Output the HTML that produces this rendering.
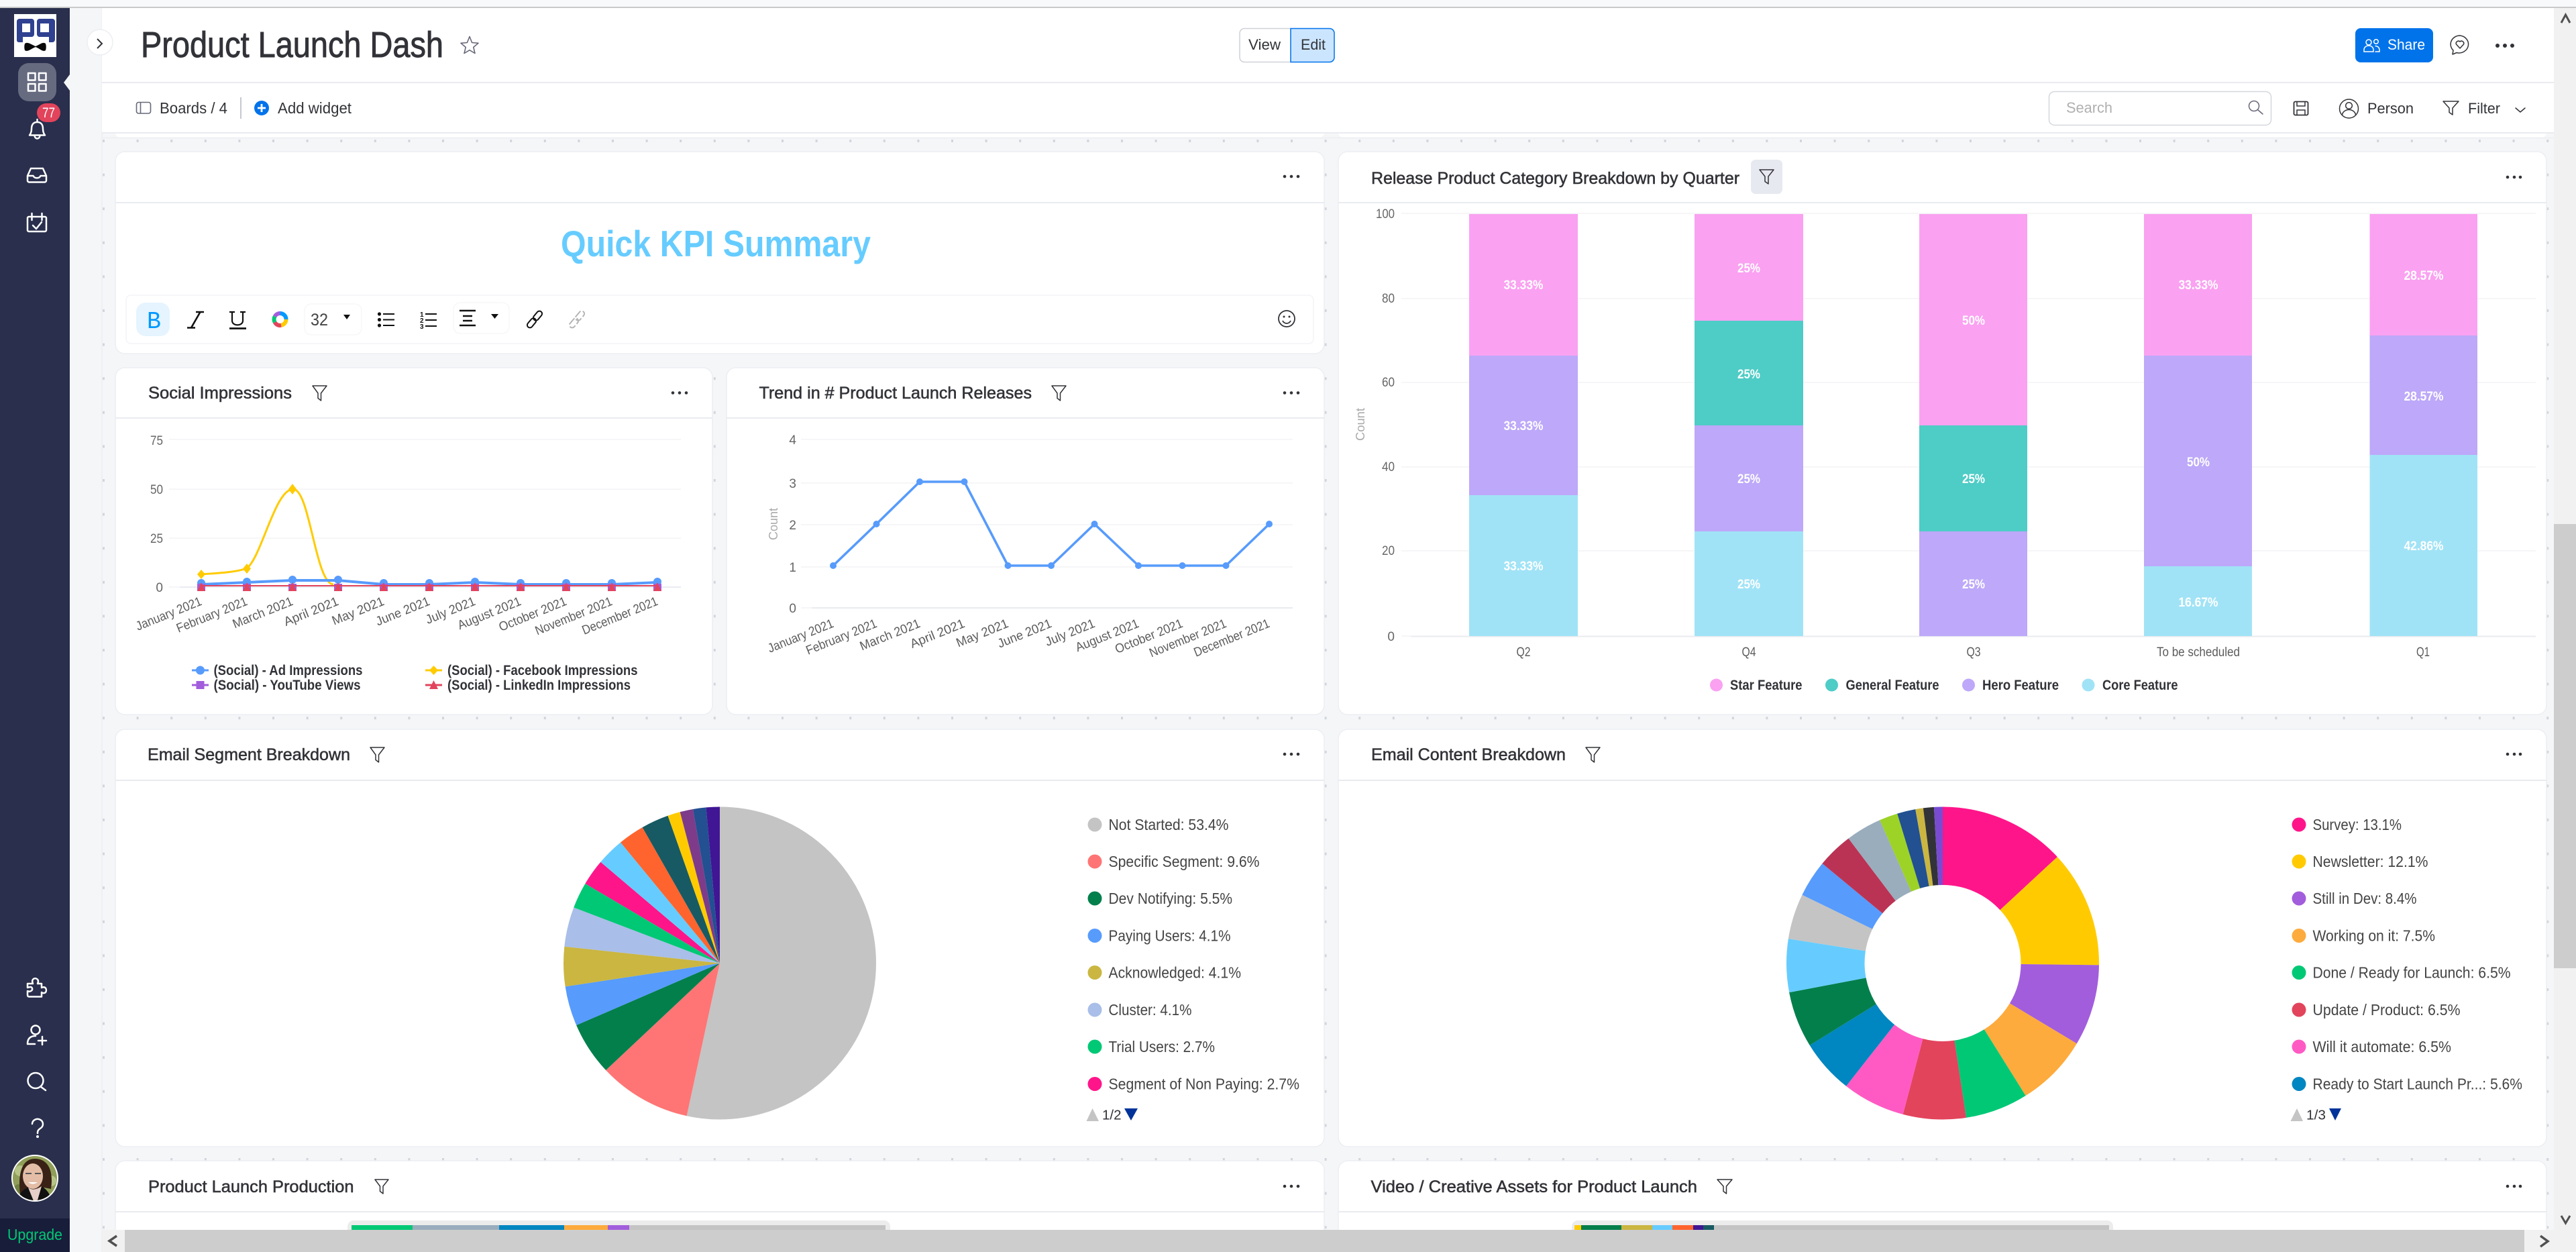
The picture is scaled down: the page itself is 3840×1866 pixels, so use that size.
<!DOCTYPE html>
<html lang="en">
<head>
<meta charset="utf-8">
<title>Product Launch Dash</title>
<style>
html,body{margin:0;padding:0;background:#fff;width:3840px;height:1866px;overflow:hidden}
svg{display:block}
text{font-family:"Liberation Sans",sans-serif;fill:#323338}
.h{font-size:25px;stroke:#323338;stroke-width:.55}
.ax{font-size:19px;fill:#666}
.xl{font-size:19px;fill:#5c5c5c}
.cnt{font-size:18px;fill:#aaa}
.dl{font-size:19px;font-weight:700;fill:#fff;text-anchor:middle}
.lg{font-size:21px;font-weight:700}
.pl{font-size:23px;fill:#444}
.ic{fill:none;stroke:#323338;stroke-width:1.5;stroke-linejoin:round;stroke-linecap:round}
.wi{fill:none;stroke:#fff;stroke-width:2.5;stroke-linejoin:round;stroke-linecap:round}
.card{fill:#fff;stroke:#eceef2;stroke-width:1.5}
.ln{stroke:#e9ebf0;stroke-width:2}
.gl{stroke:#f6f6f8;stroke-width:2}
</style>
</head>
<body>
<svg xmlns="http://www.w3.org/2000/svg" width="3840" height="1866" viewBox="0 0 3840 1866">
<defs>
<pattern id="dots" x="153" y="208" width="50.6" height="50.6" patternUnits="userSpaceOnUse"><rect width="3" height="4" fill="#d3d5dc"/></pattern>
<clipPath id="av"><circle cx="52" cy="1756" r="33"/></clipPath>
</defs>

<!-- page base -->
<rect width="3840" height="1866" fill="#f5f6f8"/>
<rect width="3840" height="10" fill="#f8f9fb"/>
<rect y="10" width="3840" height="2" fill="#c9c9c9"/>

<!-- content background -->
<rect x="152" y="205" width="3655" height="1661" fill="#f5f6f8"/>
<rect x="152" y="205" width="3655" height="1661" fill="url(#dots)"/>
<line x1="152" y1="12" x2="152" y2="1866" stroke="#e6e9ef" stroke-width="1"/>

<!-- header -->
<rect x="152" y="12" width="3655" height="186" fill="#fff"/>
<line class="ln" x1="152" y1="123" x2="3807" y2="123"/>
<line class="ln" x1="152" y1="198" x2="3807" y2="198"/>
<path d="M172 199H1974V197C1974 203 1970 205 1966 205H180C176 205 172 203 172 197Z" fill="#fff"/>
<path d="M1995 199H3796V197C3796 203 3792 205 3788 205H2003C1999 205 1995 203 1995 197Z" fill="#fff"/>
<line x1="152" y1="205.500" x2="3807" y2="205.500" stroke="#eceef2" stroke-width="1.500"/>

<text x="210" y="85" font-size="54" textLength="451" lengthAdjust="spacingAndGlyphs" style="stroke:#323338;stroke-width:.9">Product Launch Dash</text>
<path d="M700 54.500L703.600 63.500L713 64.300L705.800 70.400L708 79.500L700 74.700L692 79.500L694.200 70.400L687 64.300L696.400 63.500Z" fill="none" stroke="#676879" stroke-width="1.600" stroke-linejoin="round"/>

<!-- view / edit -->
<path d="M1924 42.500H1855a7 7 0 0 0-7 7V85.500a7 7 0 0 0 7 7H1924Z" fill="#fff" stroke="#cfd1d9" stroke-width="1.500"/>
<path d="M1924 42.500H1982a7 7 0 0 1 7 7V85.500a7 7 0 0 1-7 7H1924Z" fill="#cce5ff" stroke="#0073ea" stroke-width="1.500"/>
<text x="1861" y="74" font-size="22" textLength="48" lengthAdjust="spacingAndGlyphs">View</text>
<text x="1939" y="74" font-size="22" textLength="37" lengthAdjust="spacingAndGlyphs">Edit</text>

<!-- share -->
<rect x="3511" y="42" width="116" height="51" rx="8" fill="#0073ea"/>
<g fill="none" stroke="#fff" stroke-width="1.500" stroke-linecap="round">
<circle cx="3531" cy="63" r="4"/>
<path d="M3524 77V74a7 6 0 0 1 14 0V77Z"/>
<circle cx="3542" cy="62" r="3.300"/>
<path d="M3541 68.500a6 6 0 0 1 6 5.500V77H3541"/>
</g>
<text x="3559" y="74" font-size="22" textLength="56" lengthAdjust="spacingAndGlyphs" style="fill:#fff">Share</text>

<!-- chat heart -->
<path class="ic" d="M3667 53a14 13 0 1 1-5 25.500L3656 81L3657 75A14 13 0 0 1 3667 53Z"/>
<path class="ic" d="M3667 72L3661.500 66a3.500 3.500 0 0 1 5.500-4a3.500 3.500 0 0 1 5.500 4Z"/>
<circle cx="3723" cy="68" r="3" fill="#323338"/><circle cx="3734" cy="68" r="3" fill="#323338"/><circle cx="3745" cy="68" r="3" fill="#323338"/>

<!-- row 2 left -->
<rect x="203.500" y="152.500" width="21" height="16.500" rx="3" fill="none" stroke="#676879" stroke-width="1.600"/>
<line x1="209.500" y1="152.500" x2="209.500" y2="169" stroke="#676879" stroke-width="1.600"/>
<text x="238" y="169" font-size="23" textLength="101" lengthAdjust="spacingAndGlyphs">Boards / 4</text>
<rect x="358" y="145" width="2" height="32" fill="#c5c7d0"/>
<circle cx="390" cy="161" r="11" fill="#0073ea"/>
<path d="M384 161H396M390 155V167" stroke="#fff" stroke-width="2.800"/>
<text x="414" y="169" font-size="23" textLength="110" lengthAdjust="spacingAndGlyphs">Add widget</text>

<!-- row 2 right -->
<rect x="3054.500" y="136.500" width="331" height="50" rx="8" fill="#fff" stroke="#d5d7de" stroke-width="1.500"/>
<text x="3080" y="168" font-size="22" textLength="69" lengthAdjust="spacingAndGlyphs" style="fill:#b0b0b0">Search</text>
<circle cx="3360" cy="158" r="7.500" fill="none" stroke="#676879" stroke-width="1.500"/>
<path d="M3365.500 163.500L3373 170" stroke="#676879" stroke-width="1.500" stroke-linecap="round"/>
<rect x="3419.500" y="151.500" width="21" height="20" rx="2" fill="none" stroke="#323338" stroke-width="1.800"/>
<path d="M3424 152V158H3436V152M3424 171V164H3436V171" fill="none" stroke="#323338" stroke-width="1.500"/>
<circle cx="3501.500" cy="162" r="14" fill="none" stroke="#323338" stroke-width="1.500"/>
<circle cx="3501.500" cy="157.500" r="4.800" fill="none" stroke="#323338" stroke-width="1.500"/>
<path d="M3491.500 172a10 8.500 0 0 1 20 0" fill="none" stroke="#323338" stroke-width="1.500"/>
<text x="3529" y="169" font-size="22" textLength="69" lengthAdjust="spacingAndGlyphs">Person</text>
<path class="ic" d="M3642 151H3665L3656 161V171L3651 167.500V161Z"/>
<text x="3679" y="169" font-size="22" textLength="48" lengthAdjust="spacingAndGlyphs">Filter</text>
<path class="ic" d="M3750 161L3757 167L3764 161"/>

<!-- CARD A: Quick KPI -->
<rect class="card" x="172" y="226" width="1802" height="301" rx="14"/>
<line class="ln" x1="172" y1="302" x2="1974" y2="302"/>
<circle cx="1915" cy="263" r="2.300" fill="#323338"/><circle cx="1925" cy="263" r="2.300" fill="#323338"/><circle cx="1935" cy="263" r="2.300" fill="#323338"/>
<text x="836" y="382" font-size="55" font-weight="700" textLength="462" lengthAdjust="spacingAndGlyphs" style="fill:#66ccff">Quick KPI Summary</text>
<rect x="188" y="440" width="1770" height="72" rx="7" fill="#fff" stroke="#f3f4f6" stroke-width="1.500"/>
<rect x="203" y="451" width="50" height="50" rx="14" fill="#e5f4ff"/>
<text x="219" y="489" font-size="36" textLength="21" lengthAdjust="spacingAndGlyphs" style="font-family:'Liberation Mono',monospace;fill:#0099ff">B</text>
<path d="M292 465H304M298.500 465L285 488.500M279 488.500H291" fill="none" stroke="#111" stroke-width="2.600"/>
<path d="M346 465V478C346 486.500 362 486.500 362 478V465M342 465H350M358 465H366" fill="none" stroke="#111" stroke-width="2.200"/>
<path d="M342 489.500H367" stroke="#111" stroke-width="2.800"/>
<g fill="none" stroke-width="6" transform="rotate(-90 417.500 476)">
<circle cx="417.500" cy="476" r="9" pathLength="100" stroke="#0099ff" stroke-dasharray="25 100"/>
<circle cx="417.500" cy="476" r="9" pathLength="100" stroke="#ffcb00" stroke-dasharray="22 100" stroke-dashoffset="-25"/>
<circle cx="417.500" cy="476" r="9" pathLength="100" stroke="#e2445c" stroke-dasharray="20 100" stroke-dashoffset="-47"/>
<circle cx="417.500" cy="476" r="9" pathLength="100" stroke="#00c875" stroke-dasharray="16 100" stroke-dashoffset="-67"/>
<circle cx="417.500" cy="476" r="9" pathLength="100" stroke="#a25ddc" stroke-dasharray="17 100" stroke-dashoffset="-83"/>
</g>
<rect x="454" y="453" width="85" height="46" rx="10" fill="#fff" stroke="#f7f7f8" stroke-width="1.500"/>
<text x="463" y="485" font-size="25" textLength="26" lengthAdjust="spacingAndGlyphs" style="fill:#444">32</text>
<path d="M512 469H522L517 476Z" fill="#111"/>
<g fill="#111"><circle cx="565.500" cy="468" r="2.600"/><circle cx="565.500" cy="476.500" r="2.600"/><circle cx="565.500" cy="485" r="2.600"/></g>
<path d="M571 468H588M571 476.500H588M571 485H588" stroke="#111" stroke-width="2"/>
<text x="626" y="472" font-size="10" font-weight="700" style="fill:#111">1</text>
<text x="626" y="481" font-size="10" font-weight="700" style="fill:#111">2</text>
<text x="626" y="490" font-size="10" font-weight="700" style="fill:#111">3</text>
<path d="M634 468H651M634 477H651M634 486H651" stroke="#111" stroke-width="2"/>
<rect x="676" y="451" width="83" height="46" rx="10" fill="#fff" stroke="#f7f7f8" stroke-width="1.500"/>
<path d="M685 463H709M690 471H704M690 478H704M685 485H709" stroke="#111" stroke-width="2.600"/>
<path d="M732 468H743L737.500 475Z" fill="#111"/>
<g fill="none" stroke="#111" stroke-width="2" transform="rotate(-50 797 476)">
<rect x="782" y="472" width="16" height="8" rx="4"/><rect x="796" y="472" width="16" height="8" rx="4"/>
</g>
<g fill="none" stroke="#b5b5b5" stroke-width="2" transform="rotate(-50 860 476)" stroke-dasharray="10 3">
<rect x="845" y="472" width="16" height="8" rx="4"/><rect x="859" y="472" width="16" height="8" rx="4"/>
</g>
<circle cx="1918" cy="475" r="12" fill="none" stroke="#323338" stroke-width="1.800"/>
<circle cx="1914" cy="472" r="1.500" fill="#323338"/><circle cx="1922" cy="472" r="1.500" fill="#323338"/>
<path d="M1912 478a6.500 6.500 0 0 0 12 0" fill="none" stroke="#323338" stroke-width="1.800"/>

<!-- CARD B: Social -->
<rect class="card" x="172" y="548" width="890" height="517" rx="14"/>
<line class="ln" x1="172" y1="623" x2="1062" y2="623"/>
<text class="h" x="221" y="594" textLength="214" lengthAdjust="spacingAndGlyphs">Social Impressions</text>
<path class="ic" d="M466 575H487L478.500 586V597L474 593.500V586Z"/>
<circle cx="1003" cy="585.500" r="2.300" fill="#323338"/><circle cx="1013" cy="585.500" r="2.300" fill="#323338"/><circle cx="1023" cy="585.500" r="2.300" fill="#323338"/>
<path class="gl" d="M252 655H1015M252 729H1015M252 802H1015M252 875H268"/>
<line class="ln" x1="268" y1="875" x2="1015" y2="875"/>
<text class="ax" x="243" y="663" text-anchor="end" textLength="19" lengthAdjust="spacingAndGlyphs">75</text>
<text class="ax" x="243" y="736" text-anchor="end" textLength="19" lengthAdjust="spacingAndGlyphs">50</text>
<text class="ax" x="243" y="809" text-anchor="end" textLength="19" lengthAdjust="spacingAndGlyphs">25</text>
<text class="ax" x="243" y="882" text-anchor="end">0</text>
<path d="M300 856C325 854 352 853 368 847C390 830 410 729 437 729C462 729 470 870 497 871" fill="none" stroke="#ffcb00" stroke-width="3"/>
<path d="M300 849L306 856L300 863L294 856ZM368 840L374 847.500L368 855L362 847.500ZM436 721L442 729L436 737L430 729Z" fill="#ffcb00"/>
<polyline points="300,871 368,868 436,865 504,865 572,871 640,871 708,868 776,871 844,871 912,871 980,868" fill="none" stroke="#579bfc" stroke-width="4" stroke-linejoin="round"/>
<g fill="#579bfc">
<circle cx="300" cy="869" r="6"/><circle cx="368" cy="867" r="6"/><circle cx="436" cy="864" r="6"/><circle cx="504" cy="864" r="6"/><circle cx="572" cy="869" r="6"/><circle cx="640" cy="869" r="6"/><circle cx="708" cy="867" r="6"/><circle cx="776" cy="869" r="6"/><circle cx="844" cy="869" r="6"/><circle cx="912" cy="869" r="6"/><circle cx="980" cy="867" r="6"/>
</g>
<g fill="#a25ddc">
<rect x="294" y="870" width="12" height="11"/><rect x="362" y="870" width="12" height="11"/><rect x="430" y="870" width="12" height="11"/><rect x="498" y="870" width="12" height="11"/><rect x="566" y="870" width="12" height="11"/><rect x="634" y="870" width="12" height="11"/><rect x="702" y="870" width="12" height="11"/><rect x="770" y="870" width="12" height="11"/><rect x="838" y="870" width="12" height="11"/><rect x="906" y="870" width="12" height="11"/><rect x="974" y="870" width="12" height="11"/>
</g>
<line x1="300" y1="873" x2="980" y2="873" stroke="#e2445c" stroke-width="2"/>
<path fill="#e2445c" d="M300 868L306 881H294ZM368 868L374 881H362ZM436 868L442 881H430ZM504 868L510 881H498ZM572 868L578 881H566ZM640 868L646 881H634ZM708 868L714 881H702ZM776 868L782 881H770ZM844 868L850 881H838ZM912 868L918 881H906ZM980 868L986 881H974Z"/>
<g>
<text class="xl" text-anchor="end" transform="translate(302 901) rotate(-22)" textLength="104" lengthAdjust="spacingAndGlyphs">January 2021</text>
<text class="xl" text-anchor="end" transform="translate(370 901) rotate(-22)" textLength="112" lengthAdjust="spacingAndGlyphs">February 2021</text>
<text class="xl" text-anchor="end" transform="translate(438 901) rotate(-22)" textLength="95" lengthAdjust="spacingAndGlyphs">March 2021</text>
<text class="xl" text-anchor="end" transform="translate(506 901) rotate(-22)" textLength="86" lengthAdjust="spacingAndGlyphs">April 2021</text>
<text class="xl" text-anchor="end" transform="translate(574 901) rotate(-22)" textLength="82" lengthAdjust="spacingAndGlyphs">May 2021</text>
<text class="xl" text-anchor="end" transform="translate(642 901) rotate(-22)" textLength="85" lengthAdjust="spacingAndGlyphs">June 2021</text>
<text class="xl" text-anchor="end" transform="translate(710 901) rotate(-22)" textLength="78" lengthAdjust="spacingAndGlyphs">July 2021</text>
<text class="xl" text-anchor="end" transform="translate(778 901) rotate(-22)" textLength="100" lengthAdjust="spacingAndGlyphs">August 2021</text>
<text class="xl" text-anchor="end" transform="translate(846 901) rotate(-22)" textLength="107" lengthAdjust="spacingAndGlyphs">October 2021</text>
<text class="xl" text-anchor="end" transform="translate(914 901) rotate(-22)" textLength="122" lengthAdjust="spacingAndGlyphs">November 2021</text>
<text class="xl" text-anchor="end" transform="translate(982 901) rotate(-22)" textLength="120" lengthAdjust="spacingAndGlyphs">December 2021</text>
</g>
<line x1="286" y1="999" x2="311" y2="999" stroke="#579bfc" stroke-width="3"/><circle cx="298.500" cy="999" r="6.500" fill="#579bfc"/>
<text class="lg" x="318.500" y="1006" textLength="222" lengthAdjust="spacingAndGlyphs">(Social) - Ad Impressions</text>
<line x1="634" y1="999" x2="659" y2="999" stroke="#ffcb00" stroke-width="3"/><path d="M646.500 992L653 999L646.500 1006L640 999Z" fill="#ffcb00"/>
<text class="lg" x="667" y="1006" textLength="283.500" lengthAdjust="spacingAndGlyphs">(Social) - Facebook Impressions</text>
<line x1="286" y1="1021" x2="311" y2="1021" stroke="#a25ddc" stroke-width="3"/><rect x="292.500" y="1015" width="12" height="12" fill="#a25ddc"/>
<text class="lg" x="318.500" y="1028" textLength="219" lengthAdjust="spacingAndGlyphs">(Social) - YouTube Views</text>
<line x1="634" y1="1021" x2="659" y2="1021" stroke="#e2445c" stroke-width="3"/><path d="M646.500 1014L653 1027H640Z" fill="#e2445c"/>
<text class="lg" x="667" y="1028" textLength="273" lengthAdjust="spacingAndGlyphs">(Social) - LinkedIn Impressions</text>

<!-- CARD C: Trend -->
<rect class="card" x="1083" y="548" width="891" height="517" rx="14"/>
<line class="ln" x1="1083" y1="623" x2="1974" y2="623"/>
<text class="h" x="1131.500" y="594" textLength="406.500" lengthAdjust="spacingAndGlyphs">Trend in # Product Launch Releases</text>
<path class="ic" d="M1568 575H1589L1580.500 586V597L1576 593.500V586Z"/>
<circle cx="1915" cy="585.500" r="2.300" fill="#323338"/><circle cx="1925" cy="585.500" r="2.300" fill="#323338"/><circle cx="1935" cy="585.500" r="2.300" fill="#323338"/>
<path class="gl" d="M1194 655H1927M1194 720H1927M1194 782H1927M1194 845H1927M1194 906H1210"/>
<line class="ln" x1="1210" y1="906" x2="1927" y2="906"/>
<text class="ax" x="1187" y="662" text-anchor="end">4</text>
<text class="ax" x="1187" y="727" text-anchor="end">3</text>
<text class="ax" x="1187" y="789" text-anchor="end">2</text>
<text class="ax" x="1187" y="852" text-anchor="end">1</text>
<text class="ax" x="1187" y="913" text-anchor="end">0</text>
<text class="cnt" text-anchor="middle" transform="translate(1159 781) rotate(-90)" textLength="48" lengthAdjust="spacingAndGlyphs">Count</text>
<polyline points="1242,843 1306.500,781 1371,718 1437.500,718 1502.500,843 1567,843 1631.500,781 1697,843 1762.500,843 1827.500,843 1892,781" fill="none" stroke="#579bfc" stroke-width="3.600" stroke-linejoin="round"/>
<g fill="#579bfc">
<circle cx="1242" cy="843" r="5"/><circle cx="1306.500" cy="781" r="5"/><circle cx="1371" cy="718" r="5"/><circle cx="1437.500" cy="718" r="5"/><circle cx="1502.500" cy="843" r="5"/><circle cx="1567" cy="843" r="5"/><circle cx="1631.500" cy="781" r="5"/><circle cx="1697" cy="843" r="5"/><circle cx="1762.500" cy="843" r="5"/><circle cx="1827.500" cy="843" r="5"/><circle cx="1892" cy="781" r="5"/>
</g>
<text class="xl" text-anchor="end" transform="translate(1244 934) rotate(-22)" textLength="104" lengthAdjust="spacingAndGlyphs">January 2021</text>
<text class="xl" text-anchor="end" transform="translate(1308.500 934) rotate(-22)" textLength="112" lengthAdjust="spacingAndGlyphs">February 2021</text>
<text class="xl" text-anchor="end" transform="translate(1373 934) rotate(-22)" textLength="95" lengthAdjust="spacingAndGlyphs">March 2021</text>
<text class="xl" text-anchor="end" transform="translate(1439.500 934) rotate(-22)" textLength="86" lengthAdjust="spacingAndGlyphs">April 2021</text>
<text class="xl" text-anchor="end" transform="translate(1504.500 934) rotate(-22)" textLength="82" lengthAdjust="spacingAndGlyphs">May 2021</text>
<text class="xl" text-anchor="end" transform="translate(1569 934) rotate(-22)" textLength="85" lengthAdjust="spacingAndGlyphs">June 2021</text>
<text class="xl" text-anchor="end" transform="translate(1633.500 934) rotate(-22)" textLength="78" lengthAdjust="spacingAndGlyphs">July 2021</text>
<text class="xl" text-anchor="end" transform="translate(1699 934) rotate(-22)" textLength="100" lengthAdjust="spacingAndGlyphs">August 2021</text>
<text class="xl" text-anchor="end" transform="translate(1764.500 934) rotate(-22)" textLength="107" lengthAdjust="spacingAndGlyphs">October 2021</text>
<text class="xl" text-anchor="end" transform="translate(1829.500 934) rotate(-22)" textLength="122" lengthAdjust="spacingAndGlyphs">November 2021</text>
<text class="xl" text-anchor="end" transform="translate(1894 934) rotate(-22)" textLength="120" lengthAdjust="spacingAndGlyphs">December 2021</text>

<!-- CARD D: Release -->
<rect class="card" x="1995" y="226" width="1801" height="839" rx="14"/>
<line class="ln" x1="1995" y1="302" x2="3796" y2="302"/>
<text class="h" x="2044" y="274" textLength="549" lengthAdjust="spacingAndGlyphs">Release Product Category Breakdown by Quarter</text>
<rect x="2610" y="238" width="47" height="51" rx="7" fill="#e6e9ef"/>
<path class="ic" d="M2623 253H2644L2636 263V274L2631 270.500V263Z"/>
<circle cx="3738" cy="264" r="2.300" fill="#323338"/><circle cx="3748" cy="264" r="2.300" fill="#323338"/><circle cx="3757" cy="264" r="2.300" fill="#323338"/>
<path class="gl" d="M2089 318H3780M2089 445H3780M2089 570H3780M2089 696H3780M2089 821H3780M2089 948H2103"/>
<line class="ln" x1="2103" y1="948.500" x2="3780" y2="948.500"/>
<text class="ax" x="2079" y="325" text-anchor="end" textLength="28" lengthAdjust="spacingAndGlyphs">100</text>
<text class="ax" x="2079" y="451" text-anchor="end" textLength="19" lengthAdjust="spacingAndGlyphs">80</text>
<text class="ax" x="2079" y="576" text-anchor="end" textLength="19" lengthAdjust="spacingAndGlyphs">60</text>
<text class="ax" x="2079" y="702" text-anchor="end" textLength="19" lengthAdjust="spacingAndGlyphs">40</text>
<text class="ax" x="2079" y="827" text-anchor="end" textLength="19" lengthAdjust="spacingAndGlyphs">20</text>
<text class="ax" x="2079" y="955" text-anchor="end">0</text>
<text class="cnt" text-anchor="middle" transform="translate(2034 632.500) rotate(-90)" textLength="49" lengthAdjust="spacingAndGlyphs">Count</text>
<!-- bars -->
<rect x="2190" y="319" width="162" height="211" fill="#faa1f1"/><rect x="2190" y="530" width="162" height="208" fill="#bda8f9"/><rect x="2190" y="738" width="162" height="210" fill="#a1e3f6"/>
<rect x="2526" y="319" width="162" height="159" fill="#faa1f1"/><rect x="2526" y="478" width="162" height="156" fill="#4eccc6"/><rect x="2526" y="634" width="162" height="158" fill="#bda8f9"/><rect x="2526" y="792" width="162" height="156" fill="#a1e3f6"/>
<rect x="2861" y="319" width="161" height="315" fill="#faa1f1"/><rect x="2861" y="634" width="161" height="158" fill="#4eccc6"/><rect x="2861" y="792" width="161" height="156" fill="#bda8f9"/>
<rect x="3196" y="319" width="161" height="211" fill="#faa1f1"/><rect x="3196" y="530" width="161" height="314" fill="#bda8f9"/><rect x="3196" y="844" width="161" height="104" fill="#a1e3f6"/>
<rect x="3532.500" y="319" width="160.500" height="181" fill="#faa1f1"/><rect x="3532.500" y="500" width="160.500" height="178" fill="#bda8f9"/><rect x="3532.500" y="678" width="160.500" height="270" fill="#a1e3f6"/>
<!-- data labels -->
<text class="dl" x="2271" y="431" textLength="59" lengthAdjust="spacingAndGlyphs">33.33%</text>
<text class="dl" x="2271" y="641" textLength="59" lengthAdjust="spacingAndGlyphs">33.33%</text>
<text class="dl" x="2271" y="850" textLength="59" lengthAdjust="spacingAndGlyphs">33.33%</text>
<text class="dl" x="2607" y="406" textLength="34" lengthAdjust="spacingAndGlyphs">25%</text>
<text class="dl" x="2607" y="564" textLength="34" lengthAdjust="spacingAndGlyphs">25%</text>
<text class="dl" x="2607" y="720" textLength="34" lengthAdjust="spacingAndGlyphs">25%</text>
<text class="dl" x="2607" y="877" textLength="34" lengthAdjust="spacingAndGlyphs">25%</text>
<text class="dl" x="2942" y="484" textLength="34" lengthAdjust="spacingAndGlyphs">50%</text>
<text class="dl" x="2942" y="720" textLength="34" lengthAdjust="spacingAndGlyphs">25%</text>
<text class="dl" x="2942" y="877" textLength="34" lengthAdjust="spacingAndGlyphs">25%</text>
<text class="dl" x="3277" y="431" textLength="59" lengthAdjust="spacingAndGlyphs">33.33%</text>
<text class="dl" x="3277" y="695" textLength="34" lengthAdjust="spacingAndGlyphs">50%</text>
<text class="dl" x="3277" y="904" textLength="59" lengthAdjust="spacingAndGlyphs">16.67%</text>
<text class="dl" x="3613" y="417" textLength="59" lengthAdjust="spacingAndGlyphs">28.57%</text>
<text class="dl" x="3613" y="597" textLength="59" lengthAdjust="spacingAndGlyphs">28.57%</text>
<text class="dl" x="3613" y="820" textLength="59" lengthAdjust="spacingAndGlyphs">42.86%</text>
<!-- cats -->
<text class="xl" x="2271" y="978" text-anchor="middle" textLength="21" lengthAdjust="spacingAndGlyphs">Q2</text>
<text class="xl" x="2607" y="978" text-anchor="middle" textLength="21" lengthAdjust="spacingAndGlyphs">Q4</text>
<text class="xl" x="2942" y="978" text-anchor="middle" textLength="21" lengthAdjust="spacingAndGlyphs">Q3</text>
<text class="xl" x="3277" y="978" text-anchor="middle" textLength="124" lengthAdjust="spacingAndGlyphs">To be scheduled</text>
<text class="xl" x="3612" y="978" text-anchor="middle" textLength="20" lengthAdjust="spacingAndGlyphs">Q1</text>
<!-- legend -->
<circle cx="2558.500" cy="1021" r="9.500" fill="#faa1f1"/>
<text class="lg" x="2579" y="1028" textLength="107.500" lengthAdjust="spacingAndGlyphs">Star Feature</text>
<circle cx="2730.500" cy="1021" r="9.500" fill="#4eccc6"/>
<text class="lg" x="2751.500" y="1028" textLength="139" lengthAdjust="spacingAndGlyphs">General Feature</text>
<circle cx="2934.500" cy="1021" r="9.500" fill="#bda8f9"/>
<text class="lg" x="2955" y="1028" textLength="114" lengthAdjust="spacingAndGlyphs">Hero Feature</text>
<circle cx="3113" cy="1021" r="9.500" fill="#a1e3f6"/>
<text class="lg" x="3134" y="1028" textLength="112.500" lengthAdjust="spacingAndGlyphs">Core Feature</text>

<!-- CARD E: Email Segment -->
<rect class="card" x="172" y="1087" width="1802" height="622" rx="14"/>
<line class="ln" x1="172" y1="1163" x2="1974" y2="1163"/>
<text class="h" x="220" y="1133" textLength="302" lengthAdjust="spacingAndGlyphs">Email Segment Breakdown</text>
<path class="ic" d="M552 1114H573L564.500 1125V1136L560 1132.500V1125Z"/>
<circle cx="1915" cy="1124" r="2.300" fill="#323338"/><circle cx="1925" cy="1124" r="2.300" fill="#323338"/><circle cx="1935" cy="1124" r="2.300" fill="#323338"/>
<g fill="none" stroke-width="233" transform="rotate(-90 1073 1435.500)">
<circle cx="1073" cy="1435.500" r="116.500" pathLength="100" stroke="#c4c4c4" stroke-dasharray="53.4 100"/>
<circle cx="1073" cy="1435.500" r="116.500" pathLength="100" stroke="#ff7575" stroke-dasharray="9.6 100" stroke-dashoffset="-53.4"/>
<circle cx="1073" cy="1435.500" r="116.500" pathLength="100" stroke="#037f4c" stroke-dasharray="5.5 100" stroke-dashoffset="-63"/>
<circle cx="1073" cy="1435.500" r="116.500" pathLength="100" stroke="#579bfc" stroke-dasharray="4.1 100" stroke-dashoffset="-68.5"/>
<circle cx="1073" cy="1435.500" r="116.500" pathLength="100" stroke="#cab641" stroke-dasharray="4.1 100" stroke-dashoffset="-72.6"/>
<circle cx="1073" cy="1435.500" r="116.500" pathLength="100" stroke="#a9bee8" stroke-dasharray="4.1 100" stroke-dashoffset="-76.7"/>
<circle cx="1073" cy="1435.500" r="116.500" pathLength="100" stroke="#00c875" stroke-dasharray="2.7 100" stroke-dashoffset="-80.8"/>
<circle cx="1073" cy="1435.500" r="116.500" pathLength="100" stroke="#ff158a" stroke-dasharray="2.7 100" stroke-dashoffset="-83.5"/>
<circle cx="1073" cy="1435.500" r="116.500" pathLength="100" stroke="#66ccff" stroke-dasharray="2.85 100" stroke-dashoffset="-86.2"/>
<circle cx="1073" cy="1435.500" r="116.500" pathLength="100" stroke="#ff642e" stroke-dasharray="2.7 100" stroke-dashoffset="-89.05"/>
<circle cx="1073" cy="1435.500" r="116.500" pathLength="100" stroke="#175a63" stroke-dasharray="2.85 100" stroke-dashoffset="-91.75"/>
<circle cx="1073" cy="1435.500" r="116.500" pathLength="100" stroke="#ffcb00" stroke-dasharray="1.3 100" stroke-dashoffset="-94.6"/>
<circle cx="1073" cy="1435.500" r="116.500" pathLength="100" stroke="#7e3b8a" stroke-dasharray="1.35 100" stroke-dashoffset="-95.9"/>
<circle cx="1073" cy="1435.500" r="116.500" pathLength="100" stroke="#225091" stroke-dasharray="1.35 100" stroke-dashoffset="-97.25"/>
<circle cx="1073" cy="1435.500" r="116.500" pathLength="100" stroke="#401694" stroke-dasharray="1.4 100" stroke-dashoffset="-98.6"/>
</g>
<circle cx="1632" cy="1229" r="10.500" fill="#c4c4c4"/><text class="pl" x="1652.500" y="1237" textLength="179" lengthAdjust="spacingAndGlyphs">Not Started: 53.4%</text>
<circle cx="1632" cy="1284" r="10.500" fill="#ff7575"/><text class="pl" x="1652.500" y="1292" textLength="225" lengthAdjust="spacingAndGlyphs">Specific Segment: 9.6%</text>
<circle cx="1632" cy="1339" r="10.500" fill="#037f4c"/><text class="pl" x="1652.500" y="1347" textLength="184.500" lengthAdjust="spacingAndGlyphs">Dev Notifying: 5.5%</text>
<circle cx="1632" cy="1394.500" r="10.500" fill="#579bfc"/><text class="pl" x="1652.500" y="1402.500" textLength="182" lengthAdjust="spacingAndGlyphs">Paying Users: 4.1%</text>
<circle cx="1632" cy="1449.500" r="10.500" fill="#cab641"/><text class="pl" x="1652.500" y="1457.500" textLength="197.500" lengthAdjust="spacingAndGlyphs">Acknowledged: 4.1%</text>
<circle cx="1632" cy="1505" r="10.500" fill="#a9bee8"/><text class="pl" x="1652.500" y="1513" textLength="124" lengthAdjust="spacingAndGlyphs">Cluster: 4.1%</text>
<circle cx="1632" cy="1560" r="10.500" fill="#00c875"/><text class="pl" x="1652.500" y="1568" textLength="158.500" lengthAdjust="spacingAndGlyphs">Trial Users: 2.7%</text>
<circle cx="1632" cy="1615.500" r="10.500" fill="#ff158a"/><text class="pl" x="1652.500" y="1623.500" textLength="284.500" lengthAdjust="spacingAndGlyphs">Segment of Non Paying: 2.7%</text>
<path d="M1628.500 1652L1638 1671H1619.500Z" fill="#c4c4c4"/>
<text x="1643" y="1668.500" font-size="20" textLength="28.500" lengthAdjust="spacingAndGlyphs">1/2</text>
<path d="M1676 1652H1696L1686 1670Z" fill="#003399"/>

<!-- CARD F: Email Content -->
<rect class="card" x="1995" y="1087" width="1801" height="622" rx="14"/>
<line class="ln" x1="1995" y1="1163" x2="3796" y2="1163"/>
<text class="h" x="2044" y="1133" textLength="290" lengthAdjust="spacingAndGlyphs">Email Content Breakdown</text>
<path class="ic" d="M2364 1114H2385L2376.500 1125V1136L2372 1132.500V1125Z"/>
<circle cx="3738" cy="1124" r="2.300" fill="#323338"/><circle cx="3748" cy="1124" r="2.300" fill="#323338"/><circle cx="3757" cy="1124" r="2.300" fill="#323338"/>
<g fill="none" stroke-width="116.500" transform="rotate(-90 2896 1435.500)">
<circle cx="2896" cy="1435.500" r="174.750" pathLength="100" stroke="#ff158a" stroke-dasharray="13.1 100"/>
<circle cx="2896" cy="1435.500" r="174.750" pathLength="100" stroke="#ffcb00" stroke-dasharray="12.1 100" stroke-dashoffset="-13.1"/>
<circle cx="2896" cy="1435.500" r="174.750" pathLength="100" stroke="#a25ddc" stroke-dasharray="8.4 100" stroke-dashoffset="-25.2"/>
<circle cx="2896" cy="1435.500" r="174.750" pathLength="100" stroke="#fdab3d" stroke-dasharray="7.5 100" stroke-dashoffset="-33.6"/>
<circle cx="2896" cy="1435.500" r="174.750" pathLength="100" stroke="#00c875" stroke-dasharray="6.5 100" stroke-dashoffset="-41.1"/>
<circle cx="2896" cy="1435.500" r="174.750" pathLength="100" stroke="#e2445c" stroke-dasharray="6.5 100" stroke-dashoffset="-47.6"/>
<circle cx="2896" cy="1435.500" r="174.750" pathLength="100" stroke="#ff5ac4" stroke-dasharray="6.5 100" stroke-dashoffset="-54.1"/>
<circle cx="2896" cy="1435.500" r="174.750" pathLength="100" stroke="#0086c0" stroke-dasharray="5.6 100" stroke-dashoffset="-60.6"/>
<circle cx="2896" cy="1435.500" r="174.750" pathLength="100" stroke="#037f4c" stroke-dasharray="5.8 100" stroke-dashoffset="-66.2"/>
<circle cx="2896" cy="1435.500" r="174.750" pathLength="100" stroke="#66ccff" stroke-dasharray="5.5 100" stroke-dashoffset="-72"/>
<circle cx="2896" cy="1435.500" r="174.750" pathLength="100" stroke="#c4c4c4" stroke-dasharray="4.7 100" stroke-dashoffset="-77.5"/>
<circle cx="2896" cy="1435.500" r="174.750" pathLength="100" stroke="#579bfc" stroke-dasharray="3.8 100" stroke-dashoffset="-82.2"/>
<circle cx="2896" cy="1435.500" r="174.750" pathLength="100" stroke="#bb3354" stroke-dasharray="3.7 100" stroke-dashoffset="-86"/>
<circle cx="2896" cy="1435.500" r="174.750" pathLength="100" stroke="#9aadbd" stroke-dasharray="3.7 100" stroke-dashoffset="-89.7"/>
<circle cx="2896" cy="1435.500" r="174.750" pathLength="100" stroke="#9cd326" stroke-dasharray="1.9 100" stroke-dashoffset="-93.4"/>
<circle cx="2896" cy="1435.500" r="174.750" pathLength="100" stroke="#225091" stroke-dasharray="1.9 100" stroke-dashoffset="-95.3"/>
<circle cx="2896" cy="1435.500" r="174.750" pathLength="100" stroke="#cab641" stroke-dasharray="0.8 100" stroke-dashoffset="-97.2"/>
<circle cx="2896" cy="1435.500" r="174.750" pathLength="100" stroke="#323338" stroke-dasharray="1.1 100" stroke-dashoffset="-98"/>
<circle cx="2896" cy="1435.500" r="174.750" pathLength="100" stroke="#784bd1" stroke-dasharray="0.9 100" stroke-dashoffset="-99.1"/>
</g>
<circle cx="3427" cy="1229" r="10.500" fill="#ff158a"/><text class="pl" x="3447.500" y="1237" textLength="132.500" lengthAdjust="spacingAndGlyphs">Survey: 13.1%</text>
<circle cx="3427" cy="1284" r="10.500" fill="#ffcb00"/><text class="pl" x="3447.500" y="1292" textLength="172" lengthAdjust="spacingAndGlyphs">Newsletter: 12.1%</text>
<circle cx="3427" cy="1339" r="10.500" fill="#a25ddc"/><text class="pl" x="3447.500" y="1347" textLength="155" lengthAdjust="spacingAndGlyphs">Still in Dev: 8.4%</text>
<circle cx="3427" cy="1394.500" r="10.500" fill="#fdab3d"/><text class="pl" x="3447.500" y="1402.500" textLength="182.500" lengthAdjust="spacingAndGlyphs">Working on it: 7.5%</text>
<circle cx="3427" cy="1449.500" r="10.500" fill="#00c875"/><text class="pl" x="3447.500" y="1457.500" textLength="295" lengthAdjust="spacingAndGlyphs">Done / Ready for Launch: 6.5%</text>
<circle cx="3427" cy="1505" r="10.500" fill="#e2445c"/><text class="pl" x="3447.500" y="1513" textLength="220" lengthAdjust="spacingAndGlyphs">Update / Product: 6.5%</text>
<circle cx="3427" cy="1560" r="10.500" fill="#ff5ac4"/><text class="pl" x="3447.500" y="1568" textLength="206.500" lengthAdjust="spacingAndGlyphs">Will it automate: 6.5%</text>
<circle cx="3427" cy="1615.500" r="10.500" fill="#0086c0"/><text class="pl" x="3447.500" y="1623.500" textLength="312.500" lengthAdjust="spacingAndGlyphs">Ready to Start Launch Pr...: 5.6%</text>
<path d="M3424 1652L3433 1671H3414.500Z" fill="#c4c4c4"/>
<text x="3438" y="1668.500" font-size="20" textLength="29" lengthAdjust="spacingAndGlyphs">1/3</text>
<path d="M3472 1652H3490L3481 1670Z" fill="#003399"/>

<!-- CARD G / H -->
<rect class="card" x="172" y="1730" width="1802" height="200" rx="14"/>
<line class="ln" x1="172" y1="1806" x2="1974" y2="1806"/>
<text class="h" x="221" y="1777" textLength="306.500" lengthAdjust="spacingAndGlyphs">Product Launch Production</text>
<path class="ic" d="M559 1758H579L571 1768V1779L566.500 1775.500V1768Z"/>
<circle cx="1915" cy="1768" r="2.300" fill="#323338"/><circle cx="1925" cy="1768" r="2.300" fill="#323338"/><circle cx="1935" cy="1768" r="2.300" fill="#323338"/>
<rect x="518" y="1819" width="809" height="40" rx="9" fill="#ececec"/>
<rect x="524" y="1826" width="91" height="10" fill="#00c875"/><rect x="615" y="1826" width="129" height="10" fill="#9aadbd"/><rect x="744" y="1826" width="97" height="10" fill="#0086c0"/><rect x="841" y="1826" width="65" height="10" fill="#fdab3d"/><rect x="906" y="1826" width="32" height="10" fill="#a25ddc"/><rect x="938" y="1826" width="382" height="10" fill="#c4c4c4"/>

<rect class="card" x="1995" y="1730" width="1801" height="200" rx="14"/>
<line class="ln" x1="1995" y1="1806" x2="3796" y2="1806"/>
<text class="h" x="2043.500" y="1777" textLength="486.500" lengthAdjust="spacingAndGlyphs">Video / Creative Assets for Product Launch</text>
<path class="ic" d="M2560 1758H2582L2573.500 1768V1779L2569 1775.500V1768Z"/>
<circle cx="3738" cy="1768" r="2.300" fill="#323338"/><circle cx="3748" cy="1768" r="2.300" fill="#323338"/><circle cx="3757" cy="1768" r="2.300" fill="#323338"/>
<rect x="2343" y="1819" width="807" height="40" rx="9" fill="#ececec"/>
<rect x="2347" y="1826" width="10" height="10" fill="#ffcb00"/><rect x="2357" y="1826" width="60" height="10" fill="#037f4c"/><rect x="2417" y="1826" width="46" height="10" fill="#cab641"/><rect x="2463" y="1826" width="30" height="10" fill="#66ccff"/><rect x="2493" y="1826" width="31" height="10" fill="#ff642e"/><rect x="2524" y="1826" width="15" height="10" fill="#401694"/><rect x="2539" y="1826" width="16" height="10" fill="#175a63"/><rect x="2555" y="1826" width="589" height="10" fill="#c4c4c4"/>

<!-- scrollbars -->
<rect x="3807" y="12" width="33" height="1854" fill="#f1f1f1"/>
<rect x="3807" y="781" width="33" height="662" fill="#cdcdcd"/>
<path d="M3818 34L3824.500 22L3831 34" fill="none" stroke="#505050" stroke-width="3"/>
<path d="M3818 1812L3824.500 1823L3831 1812" fill="none" stroke="#505050" stroke-width="3"/>
<rect x="152" y="1833" width="3655" height="33" fill="#f1f1f1"/>
<rect x="186" y="1833" width="3577" height="33" fill="#cdcdcd"/>
<path d="M174 1842L163 1849.500L174 1857" fill="none" stroke="#505050" stroke-width="3.500"/>
<path d="M3787 1842L3798 1850L3787 1858" fill="none" stroke="#505050" stroke-width="3.500"/>

<!-- sidebar -->
<rect x="0" y="12" width="104" height="1854" fill="#292f4c"/>
<rect x="0" y="1816" width="104" height="50" fill="#181d3a"/>
<path d="M104 111L95 123L104 135Z" fill="#f5f6f8"/>
<!-- logo -->
<rect x="21" y="21" width="63" height="64" fill="#fff"/>
<path d="M29 28H47a4 4 0 0 1 4 4V51a4 4 0 0 1-4 4H34V63H28a3 3 0 0 1-3-3V32a4 4 0 0 1 4-4ZM33 35V48H45V35Z" fill="#2f4190" fill-rule="evenodd"/>
<path d="M59 28H78a4 4 0 0 1 4 4V59a4 4 0 0 1-4 4H73V55H59a4 4 0 0 1-4-4V32a4 4 0 0 1 4-4ZM60 35V48H73V35Z" fill="#2f4190" fill-rule="evenodd"/>
<path d="M37 65C41 62 46 66 51 68C52 69 54 69 55 68C60 66 64 62 68 65C69 68 69 72 68 75C64 78 60 73 55 71C54 70 52 70 51 71C46 73 41 78 37 75C36 72 36 68 37 65Z" fill="#0a0a0a"/>
<!-- nav -->
<rect x="27" y="94" width="57" height="57" rx="16" fill="#676b80"/>
<g class="wi"><rect x="42" y="109" width="10.500" height="10.500"/><rect x="58" y="109" width="10.500" height="10.500"/><rect x="42" y="125" width="10.500" height="10.500"/><rect x="58" y="125" width="10.500" height="10.500"/></g>
<path class="wi" d="M55.500 178V182M55.500 182C49 182 47 187 47 192C47 196 46 199 44 201.500H67C65 199 64 196 64 192C64 187 62 182 55.500 182ZM51.500 202a4 4.500 0 0 0 8 0"/>
<rect x="55" y="154" width="35" height="28" rx="14" fill="#e2445c"/>
<text x="63" y="175" font-size="21" textLength="19" lengthAdjust="spacingAndGlyphs" style="fill:#fff">77</text>
<path class="wi" d="M46 251H64L69 262V269a2.500 2.500 0 0 1-2.500 2.500H43.500a2.500 2.500 0 0 1-2.500-2.500V262ZM41 262H49.500a6 5.500 0 0 0 11 0H69"/>
<path class="wi" d="M43 323H67a2 2 0 0 1 2 2V343a2 2 0 0 1-2 2H43a2 2 0 0 1-2-2V325a2 2 0 0 1 2-2ZM47.500 318V328M62.500 318V328M49 336L54 341L62 331"/>
<path class="wi" d="M41 1466H49C46 1459 52 1457 55 1459C58 1461 57 1464 56 1466H62V1472C69 1469 70 1476 68 1479C66 1481 63 1480 62 1479V1485.500H44C41 1485.500 41 1484 41 1482V1477C45 1479 49 1476 48 1473C47 1470 44 1471 41 1472Z"/>
<circle class="wi" cx="53" cy="1535" r="6.500"/>
<path class="wi" d="M52 1556H41C41 1548 45 1544 53 1544M57 1551H69M63 1545V1557"/>
<circle class="wi" cx="53" cy="1610.500" r="11.500"/>
<path class="wi" d="M60.500 1619.500L68 1625"/>
<path class="wi" d="M48 1675a8 7.500 0 1 1 12.500 6.500C57 1684 56 1685 56 1689"/>
<circle cx="56" cy="1694" r="2" fill="#fff"/>
<!-- avatar -->
<circle cx="52" cy="1756" r="35" fill="#fff"/>
<g clip-path="url(#av)">
<rect x="17" y="1722" width="70" height="70" fill="#8f9e58"/>
<circle cx="30" cy="1745" r="8" fill="#b6c486"/><circle cx="76" cy="1760" r="8" fill="#b6c486"/><circle cx="28" cy="1772" r="7" fill="#6f8040"/>
<path d="M30 1780C27 1755 30 1727 52 1727C72 1727 80 1745 76 1772L66 1770L40 1775Z" fill="#3a2116"/>
<ellipse cx="49" cy="1753" rx="15" ry="19" fill="#e3bda6"/>
<path d="M38 1749h9M52 1749h9" stroke="#555" stroke-width="2"/>
<path d="M42 1762q7 5 14 0" fill="#fff"/>
<path d="M26 1792C27 1778 36 1772 42 1770L51 1792ZM76 1792C76 1780 70 1773 62 1768L53 1792Z" fill="#111"/>
<path d="M42 1770L51 1792H55L62 1768Q50 1776 42 1770Z" fill="#e6cfc8"/>
</g>
<text x="11" y="1848" font-size="23" textLength="82" lengthAdjust="spacingAndGlyphs" style="fill:#00c875">Upgrade</text>

<!-- expand button -->
<circle cx="149" cy="63" r="19" fill="#fff" stroke="#eceef2" stroke-width="1.500"/>
<path d="M145 58L152 65L145 72" fill="none" stroke="#323338" stroke-width="2"/>
</svg>
</body>
</html>
